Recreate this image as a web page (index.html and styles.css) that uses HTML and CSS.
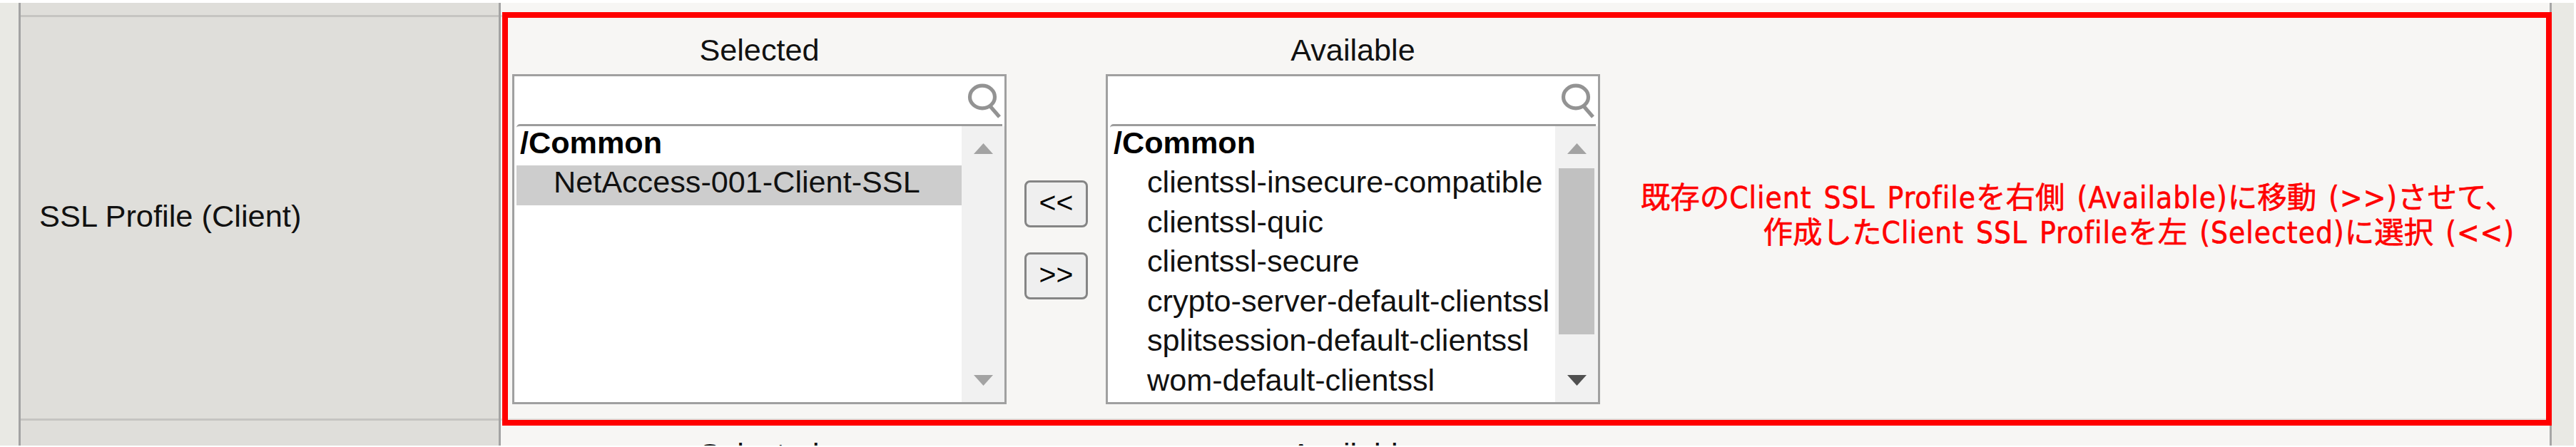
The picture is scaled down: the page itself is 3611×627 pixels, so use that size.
FILE: index.html
```html
<!DOCTYPE html>
<html lang="ja">
<head>
<meta charset="utf-8">
<title>SSL Profile (Client)</title>
<link rel="stylesheet" href="styles.css">
</head>
<body>
<main class="page">
  <div class="table">
    <div class="row row-prev"><div class="label"></div><div class="content"></div></div>
    <div class="row row-main">
      <div class="label">SSL Profile (Client)</div>
      <div class="content">
        <section class="picker">
          <h2 class="title">Selected</h2>
          <div class="box">
            <div class="search">
              <svg class="lens" viewBox="0 0 50 56"><ellipse cx="22" cy="22" rx="17.5" ry="15.8"/><path d="M33 35L46 50"/></svg>
            </div>
            <div class="list">
              <ul class="items">
                <li class="group">/Common</li>
                <li class="item item-on">NetAccess-001-Client-SSL</li>
              </ul>
              <div class="bar">
                <svg class="arrow arrow-up" viewBox="0 0 27 15"><path d="M0 15L13.500 0L27 15Z"/></svg>
                <svg class="arrow arrow-down" viewBox="0 0 27 15"><path d="M0 0L13.500 15L27 0Z"/></svg>
              </div>
            </div>
          </div>
        </section>
        <div class="moves">
          <button class="move">&lt;&lt;</button>
          <button class="move">&gt;&gt;</button>
        </div>
        <section class="picker">
          <h2 class="title">Available</h2>
          <div class="box">
            <div class="search">
              <svg class="lens" viewBox="0 0 50 56"><ellipse cx="22" cy="22" rx="17.5" ry="15.8"/><path d="M33 35L46 50"/></svg>
            </div>
            <div class="list">
              <ul class="items">
                <li class="group">/Common</li>
                <li class="item">clientssl-insecure-compatible</li>
                <li class="item">clientssl-quic</li>
                <li class="item">clientssl-secure</li>
                <li class="item">crypto-server-default-clientssl</li>
                <li class="item">splitsession-default-clientssl</li>
                <li class="item">wom-default-clientssl</li>
              </ul>
              <div class="bar">
                <svg class="arrow arrow-up" viewBox="0 0 27 15"><path d="M0 15L13.500 0L27 15Z"/></svg>
                <div class="thumb"></div>
                <svg class="arrow arrow-down arrow-live" viewBox="0 0 27 15"><path d="M0 0L13.500 15L27 0Z"/></svg>
              </div>
            </div>
          </div>
        </section>
      </div>
    </div>
    <div class="row row-next">
      <div class="label"></div>
      <div class="content">
        <section class="picker"><h2 class="title">Selected</h2></section>
        <div class="moves"></div>
        <section class="picker"><h2 class="title">Available</h2></section>
      </div>
    </div>
  </div>
  <div class="callout">
    <p class="note">
      <span class="line"><span class="ja">既存の</span>Client SSL Profile<span class="ja">を右側</span> (Available)<span class="ja">に移動</span> (&gt;&gt;)<span class="ja">させて、</span></span>
      <span class="line"><span class="ja">作成した</span>Client SSL Profile<span class="ja">を左</span> (Selected)<span class="ja">に選択</span> (&lt;&lt;)</span>
    </p>
  </div>
</main>
</body>
</html>
```
FILE: styles.css
```css
* { box-sizing: border-box; }
body { margin: 0; background: #fff; color: #111; font-family: "Liberation Sans", Arial, sans-serif; font-size: 43.2px; }
.page { position: relative; width: 3611px; height: 627px; padding: 4px 3px 2px 0; overflow: hidden; }
.table { height: 621px; padding: 0 31px 0 26px; background: #e9e9e4; overflow: hidden; }
.row { display: grid; grid-template-columns: 676px 1fr; border-right: 3px solid #a6a6a6; }
.row-prev { height: 17px; }
.row-main { height: 566px; }
.row-next { height: 160px; }
.label { display: flex; align-items: center; padding: 0 0 2px 26px; border: solid #a3a3a3; border-width: 0 3px; background: #dfdeda; font-size: 43.4px; white-space: nowrap; }
.content { display: flex; padding-left: 16px; background: #f7f6f4; }
.row-main .label, .row-next .label { background: linear-gradient(#c5c4c1 0 3px, #dfdeda 3px); }
.row-main .content, .row-next .content { background: linear-gradient(#e1e1de 0 3px, #f7f6f4 3px); }
.picker { width: 693px; padding-top: 24px; }
.title { margin: 0; height: 59px; line-height: 51px; font-size: 43.2px; font-weight: 400; text-align: center; }
.row-next .title { line-height: 53px; }
.box { height: 463px; border: 3px solid #a0a0a0; background: #fff; }
.search { height: 67px; display: flex; justify-content: flex-end; padding: 7px 3px 0 0; }
.lens { width: 50px; height: 56px; fill: none; stroke: #939393; stroke-width: 5.2; }
.list { height: 390px; display: flex; margin: 0 3px; border-top: 3px solid #9c9c9c; border-top-left-radius: 5px; }
.items { flex: 1; margin: 0; padding: 0; list-style: none; white-space: nowrap; }
.group { height: 55px; padding-left: 5px; line-height: 46px; font-weight: 700; color: #000; }
.item { height: 55.600px; padding-left: 52px; line-height: 46px; }
.item-on { background: #cdcdcd; }
.bar { width: 60px; margin-right: -3px; padding: 24px 0 23px; display: flex; flex-direction: column; align-items: center; background: #f1f1f1; }
.arrow { width: 27px; height: 15px; fill: #a3a3a3; flex: none; }
.arrow-down { margin-top: auto; }
.arrow-live { fill: #505050; }
.thumb { width: 50px; height: 233px; margin: 20px 0 0 0; background: #c1c1c1; }
.moves { width: 139px; padding-top: 232px; display: flex; flex-direction: column; align-items: center; gap: 35px; }
.move { width: 89px; height: 66px; padding: 0 0 4px; border: 3px solid #858585; border-radius: 8px; background: #efefef; color: #000; font: 41px/50px "Liberation Sans", Arial, sans-serif; }
.callout { position: absolute; left: 704px; top: 17px; width: 2873px; height: 580px; border: 8px solid #f00; padding: 228px 44px 0 0; }
.note { margin: 0; display: flex; flex-direction: column; align-items: flex-end; color: #f00; font: 42px/49px "DejaVu Sans Condensed", "Noto Sans", sans-serif; letter-spacing: 1px; word-spacing: 4px; -webkit-text-stroke: 0.6px #f00; white-space: nowrap; }
.line { display: block; height: 49px; }
.ja { font-family: "Noto Sans CJK JP", sans-serif; font-size: 41.5px; line-height: 40px; letter-spacing: 0; }
```
